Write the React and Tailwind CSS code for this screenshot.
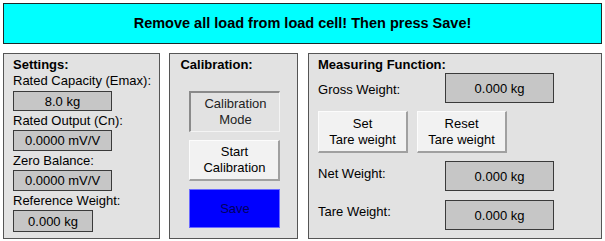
import React from "react";

const font = { fontFamily: '"Liberation Sans", Arial, sans-serif' };

function ValueBox({ children, className = "" }) {
  return (
    <div
      className={`flex items-center justify-center border border-[#3a3a3a] bg-[#c6c6c6] text-[13px] leading-none text-black ${className}`}
    >
      {children}
    </div>
  );
}

function RaisedButton({ children, className = "" }) {
  return (
    <div
      className={`flex flex-col items-center justify-center border-t border-l border-[#fcfcfc] border-r-2 border-b-2 border-r-[#a0a0a0] border-b-[#a0a0a0] bg-[#f2f2f2] text-center text-[13px] leading-[16px] text-black ${className}`}
    >
      {children}
    </div>
  );
}

export default function App() {
  return (
    <div
      className="flex h-[241px] w-[605px] flex-col bg-white px-[3px] pt-[3px]"
      style={font}
    >
      <div className="flex h-[41px] items-center justify-center border border-[#1c2a2a] bg-[#00ffff] text-[14.5px] font-bold text-black">
        Remove all load from load cell! Then press Save!
      </div>

      <div className="mt-[9px] flex h-[186px] gap-[8px]">
        {/* Settings */}
        <div className="flex w-[158px] flex-col border border-[#555] bg-[#e2e2e2] pl-[9px] pt-[3px] text-[13px] leading-[15px] text-black">
          <div className="font-bold">Settings:</div>
          <div className="mt-[1px]">Rated Capacity (Emax):</div>
          <ValueBox className="mt-[3px] h-[20px] w-[99px]">8.0 kg</ValueBox>
          <div className="mt-[2px]">Rated Output (Cn):</div>
          <ValueBox className="mt-[2px] h-[21px] w-[99px]">0.0000 mV/V</ValueBox>
          <div className="mt-[2px]">Zero Balance:</div>
          <ValueBox className="mt-[2px] h-[21px] w-[99px]">0.0000 mV/V</ValueBox>
          <div className="mt-[2px]">Reference Weight:</div>
          <ValueBox className="mt-[2px] h-[22px] w-[80px]">0.000 kg</ValueBox>
        </div>

        {/* Calibration */}
        <div className="ml-[1px] flex w-[129px] flex-col border border-[#555] bg-[#e2e2e2] pt-[3px] text-[13px] leading-[15px] text-black">
          <div className="pl-[10px] font-bold">Calibration:</div>
          <div className="ml-[19px] mt-[19px] flex h-[41px] w-[91px] flex-col items-center justify-center border-t-2 border-l-2 border-[#8a8a8a] border-r border-b border-r-[#f4f4f4] border-b-[#f4f4f4] bg-[#e2e2e2] text-center leading-[16px] text-[#222]">
            <span>Calibration</span>
            <span>Mode</span>
          </div>
          <RaisedButton className="ml-[19px] mt-[8px] h-[41px] w-[91px]">
            <span>Start</span>
            <span>Calibration</span>
          </RaisedButton>
          <div className="ml-[19px] mt-[8px] flex h-[39px] w-[91px] items-center justify-center border border-[#6a6aff] bg-[#0000ff] text-[13px] text-[#000060]">
            Save
          </div>
        </div>

        {/* Measuring Function */}
        <div className="ml-[2px] flex w-[295px] flex-col border border-[#555] bg-[#e2e2e2] pl-[9px] pt-[3px] text-[13px] leading-[15px] text-black">
          <div className="font-bold">Measuring Function:</div>
          <div className="flex">
            <div className="w-[127px] pt-[10px]">Gross Weight:</div>
            <ValueBox className="mt-[1px] h-[30px] w-[109px]">0.000 kg</ValueBox>
          </div>
          <div className="mt-[8px] flex gap-[9px]">
            <RaisedButton className="h-[42px] w-[90px]">
              <span>Set</span>
              <span>Tare weight</span>
            </RaisedButton>
            <RaisedButton className="h-[42px] w-[90px]">
              <span>Reset</span>
              <span>Tare weight</span>
            </RaisedButton>
          </div>
          <div className="mt-[8px] flex">
            <div className="w-[127px] pt-[5px]">Net Weight:</div>
            <ValueBox className="h-[30px] w-[109px]">0.000 kg</ValueBox>
          </div>
          <div className="mt-[9px] flex">
            <div className="w-[127px] pt-[4px]">Tare Weight:</div>
            <ValueBox className="h-[30px] w-[109px]">0.000 kg</ValueBox>
          </div>
        </div>
      </div>
    </div>
  );
}
